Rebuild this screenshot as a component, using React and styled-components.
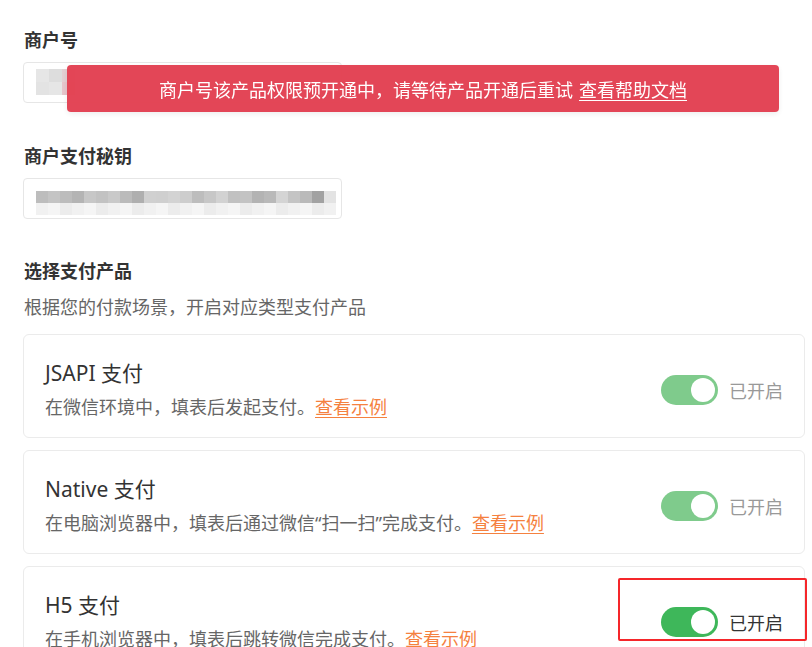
import React from "react";
import styled, { createGlobalStyle } from "styled-components";

const GlobalStyle = createGlobalStyle`
  html, body {
    margin: 0;
    padding: 0;
    background: #fff;
    overflow: hidden;
  }
  body {
    font-family: "Noto Sans", "Noto Sans CJK SC", sans-serif;
    color: #333;
  }
`;

const Page = styled.div`
  position: relative;
  width: 812px;
  height: 647px;
  box-sizing: border-box;
  padding: 28px 7px 0 23px;
  overflow: hidden;
`;

const Field = styled.div`
  display: flex;
  flex-direction: column;
  margin-bottom: ${(p) => p.$gap || 41}px;
`;

const Label = styled.div`
  font-size: 18px;
  line-height: 24px;
  font-weight: 700;
  color: #333;
  margin-bottom: ${(p) => p.$mb || 10}px;
  padding-left: 1px;
`;

const Hint = styled.div`
  font-size: 18px;
  line-height: 24px;
  color: #666;
  margin-bottom: 15px;
  padding-left: 1px;
`;

const InputBox = styled.div`
  position: relative;
  width: 319px;
  height: 41px;
  box-sizing: border-box;
  border: 1px solid #e6e6e6;
  border-radius: 4px;
  background: #fff;
`;

const Mosaic = styled.div`
  position: absolute;
  left: ${(p) => p.$left}px;
  top: ${(p) => p.$top}px;
  display: flex;
  flex-direction: column;
  filter: blur(0.6px);
`;

const MosaicRow = styled.div`
  display: flex;
`;

const Cell = styled.span`
  display: block;
  width: ${(p) => p.$size}px;
  height: ${(p) => p.$size}px;
`;

const Toast = styled.div`
  position: absolute;
  left: 67px;
  top: 65px;
  width: 712px;
  height: 47px;
  border-radius: 4px;
  background: #e34152;
  color: #fff;
  font-size: 18px;
  display: flex;
  align-items: center;
  justify-content: center;
  box-shadow: 0 2px 6px rgba(0, 0, 0, 0.08);
  opacity: 0.97;

  a {
    color: #fff;
    text-decoration: underline;
    text-underline-offset: 3px;
    margin-left: 6px;
  }
`;

const CardList = styled.div`
  display: flex;
  flex-direction: column;
  gap: 12px;
`;

const Card = styled.div`
  position: relative;
  display: flex;
  align-items: center;
  justify-content: space-between;
  width: 782px;
  box-sizing: border-box;
  border: 1px solid #ebebeb;
  border-radius: 6px;
  padding: 24px 21px 17px 21px;
`;

const CardInfo = styled.div`
  display: flex;
  flex-direction: column;
  gap: 7px;
`;

const CardTitle = styled.div`
  font-size: 21px;
  line-height: 28px;
  color: #333;
`;

const CardDesc = styled.div`
  font-size: 18px;
  line-height: 26px;
  color: #666;

  a {
    color: #f5813f;
    text-decoration: underline;
    text-underline-offset: 3px;
  }
`;

const SwitchWrap = styled.div`
  display: flex;
  align-items: center;
  gap: 11px;
  margin-top: 0;
`;

const Track = styled.div`
  position: relative;
  width: 57px;
  height: 30px;
  border-radius: 15px;
  background: ${(p) => (p.$active ? "#3eb75a" : "#7fcb8c")};
`;

const Knob = styled.div`
  position: absolute;
  right: 3px;
  top: 3px;
  width: 24px;
  height: 24px;
  border-radius: 50%;
  background: #fff;
`;

const SwitchText = styled.span`
  font-size: 18px;
  color: ${(p) => (p.$active ? "#333" : "#999")};
`;

const Highlight = styled.div`
  position: absolute;
  left: 594px;
  top: 11px;
  width: 189px;
  height: 63px;
  box-sizing: border-box;
  border: 2px solid #f5262a;
  border-radius: 2px;
`;

const shortMosaic = [
  ["#e6e6e6", "#dddddd", "#e3cfd2"],
  ["#e3e3e3", "#e6e6e6", "#e6c5cb"],
];

const longTop = [
  "#bdbdbd", "#c4c4c4", "#bcbcbc", "#b4b4b4", "#c7c7c7", "#c2c2c2", "#c9c9c9",
  "#bbbbbb", "#afafaf", "#d0d0d0", "#cfcfcf", "#d3d3d3", "#cdcdcd", "#bdbdbd",
  "#c7c7c7", "#d2d2d2", "#c1c1c1", "#c3c3c3", "#b3b3b3", "#b9b9b9", "#d4d4d4",
  "#c4c4c4", "#bababa", "#a2a2a2", "#e3e3e3",
];
const longBottom = longTop.map((_, i) => (i % 3 === 0 ? "#f1f1f1" : i % 3 === 1 ? "#f5f5f5" : "#ececec"));

const products = [
  {
    title: "JSAPI 支付",
    desc: "在微信环境中，填表后发起支付。",
    active: false,
  },
  {
    title: "Native 支付",
    desc: "在电脑浏览器中，填表后通过微信“扫一扫”完成支付。",
    active: false,
  },
  {
    title: "H5 支付",
    desc: "在手机浏览器中，填表后跳转微信完成支付。",
    active: true,
  },
];

function Pixels({ rows, size, left, top }) {
  return (
    <Mosaic $left={left} $top={top}>
      {rows.map((row, r) => (
        <MosaicRow key={r}>
          {row.map((c, i) => (
            <Cell key={i} $size={size} style={{ background: c }} />
          ))}
        </MosaicRow>
      ))}
    </Mosaic>
  );
}

export default function App() {
  return (
    <>
      <GlobalStyle />
      <Page>
        <Field>
          <Label>商户号</Label>
          <InputBox>
            <Pixels rows={shortMosaic} size={13} left={12} top={6} />
          </InputBox>
        </Field>

        <Field $gap={40}>
          <Label>商户支付秘钥</Label>
          <InputBox>
            <Pixels rows={[longTop, longBottom]} size={12} left={12} top={12} />
          </InputBox>
        </Field>

        <Label $mb={12}>选择支付产品</Label>
        <Hint>根据您的付款场景，开启对应类型支付产品</Hint>

        <CardList>
          {products.map((p) => (
            <Card key={p.title}>
              <CardInfo>
                <CardTitle>{p.title}</CardTitle>
                <CardDesc>
                  {p.desc}
                  <a>查看示例</a>
                </CardDesc>
              </CardInfo>
              <SwitchWrap>
                <Track $active={p.active}>
                  <Knob />
                </Track>
                <SwitchText $active={p.active}>已开启</SwitchText>
              </SwitchWrap>
              {p.active && <Highlight />}
            </Card>
          ))}
        </CardList>

        <Toast>
          商户号该产品权限预开通中，请等待产品开通后重试
          <a>查看帮助文档</a>
        </Toast>
      </Page>
    </>
  );
}
